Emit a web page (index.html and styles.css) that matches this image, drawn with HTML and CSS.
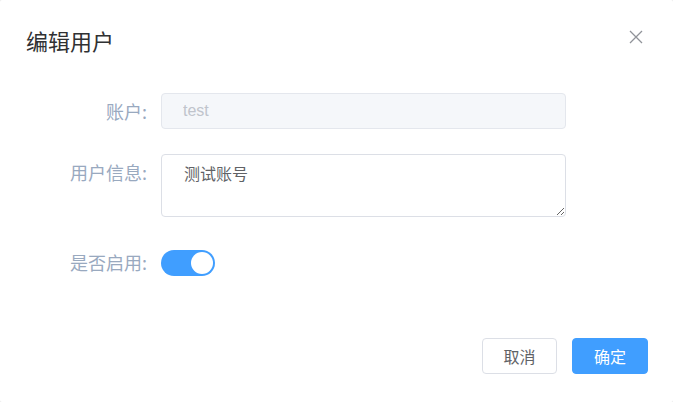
FILE: index.html
```html
<!DOCTYPE html>
<html lang="zh-CN">
<head>
<meta charset="utf-8">
<title>编辑用户</title>
<link rel="stylesheet" href="styles.css">
</head>
<body>
<div class="dialog">
  <div class="dialog-header">
    <span class="dialog-title">编辑用户</span>
    <button class="dialog-close" aria-label="Close">
      <svg viewBox="0 0 14 14" width="14" height="14"><path d="M1 1 L13 13 M13 1 L1 13" stroke="#909399" stroke-width="1.3" fill="none"/></svg>
    </button>
  </div>
  <form class="form">
    <div class="form-item">
      <label class="form-label">账户:</label>
      <div class="form-content">
        <input class="input input-disabled" type="text" value="test" disabled>
      </div>
    </div>
    <div class="form-item form-item-area">
      <label class="form-label">用户信息:</label>
      <div class="form-content">
        <textarea class="textarea">测试账号</textarea>
      </div>
    </div>
    <div class="form-item">
      <label class="form-label">是否启用:</label>
      <div class="form-content">
        <span class="switch"><span class="switch-knob"></span></span>
      </div>
    </div>
  </form>
  <div class="dialog-footer">
    <button class="btn" type="button">取消</button>
    <button class="btn btn-primary" type="button">确定</button>
  </div>
</div>
</body>
</html>
```

FILE: styles.css
```css
html {
  background: #e9e9e9;
}
body {
  margin: 0;
  font-family: "Liberation Sans", "Noto Sans CJK SC", sans-serif;
}
.dialog {
  width: 673px;
  height: 402px;
  box-sizing: border-box;
  background: #fff;
  border-radius: 2px;
  display: flex;
  flex-direction: column;
}
.dialog-header {
  display: flex;
  justify-content: space-between;
  align-items: flex-start;
  padding: 25px 30px 0 26px;
}
.dialog-title {
  font-size: 22px;
  line-height: 30px;
  color: #303133;
  font-family: "Noto Sans CJK SC", sans-serif;
}
.dialog-close {
  margin-top: 5px;
  padding: 0;
  border: 0;
  background: none;
  width: 14px;
  height: 14px;
  display: flex;
}
.form {
  margin: 38px 107px 0 26px;
  display: flex;
  flex-direction: column;
}
.form-item {
  display: flex;
  margin-bottom: 25px;
}
.form-item-area {
  margin-bottom: 27px;
}
.form-label {
  width: 135px;
  flex: none;
  box-sizing: border-box;
  padding-right: 14px;
  text-align: right;
  font-size: 18px;
  line-height: 36px;
  color: #99a9bf;
  font-family: "Noto Sans CJK SC", sans-serif;
  white-space: nowrap;
}
.form-content {
  flex: 1;
  display: flex;
  align-items: center;
  min-height: 36px;
}
.input {
  width: 100%;
  height: 36px;
  box-sizing: border-box;
  border: 1px solid #dcdfe6;
  border-radius: 4px;
  padding: 0 21px;
  font-size: 16px;
  font-family: "Liberation Sans", "Noto Sans CJK SC", sans-serif;
  color: #606266;
  outline: none;
}
.input-disabled {
  background: #f5f7fa;
  border-color: #e4e7ed;
  color: #c0c4cc;
  -webkit-text-fill-color: #c0c4cc;
  opacity: 1;
}
.textarea {
  width: 100%;
  height: 63px;
  box-sizing: border-box;
  border: 1px solid #dcdfe6;
  border-radius: 4px;
  padding: 6px 22px;
  font-size: 16px;
  line-height: 24px;
  font-family: "Noto Sans CJK SC", sans-serif;
  color: #606266;
  outline: none;
  resize: vertical;
  display: block;
}
.switch {
  width: 54px;
  height: 26px;
  box-sizing: border-box;
  border-radius: 13px;
  background: #409eff;
  display: flex;
  justify-content: flex-end;
  align-items: center;
  padding: 0 2px;
  margin-top: 2px;
}
.switch-knob {
  width: 22px;
  height: 22px;
  border-radius: 50%;
  background: #fff;
}
.dialog-footer {
  margin-top: auto;
  display: flex;
  justify-content: flex-end;
  gap: 15px;
  padding: 0 25px 28px 0;
}
.btn {
  height: 36px;
  padding: 0 20px;
  min-width: 75px;
  box-sizing: border-box;
  border: 1px solid #dcdfe6;
  border-radius: 4px;
  background: #fff;
  color: #606266;
  font-size: 16px;
  font-family: "Noto Sans CJK SC", sans-serif;
}
.btn-primary {
  background: #409eff;
  border-color: #409eff;
  color: #fff;
  min-width: 76px;
}
```
